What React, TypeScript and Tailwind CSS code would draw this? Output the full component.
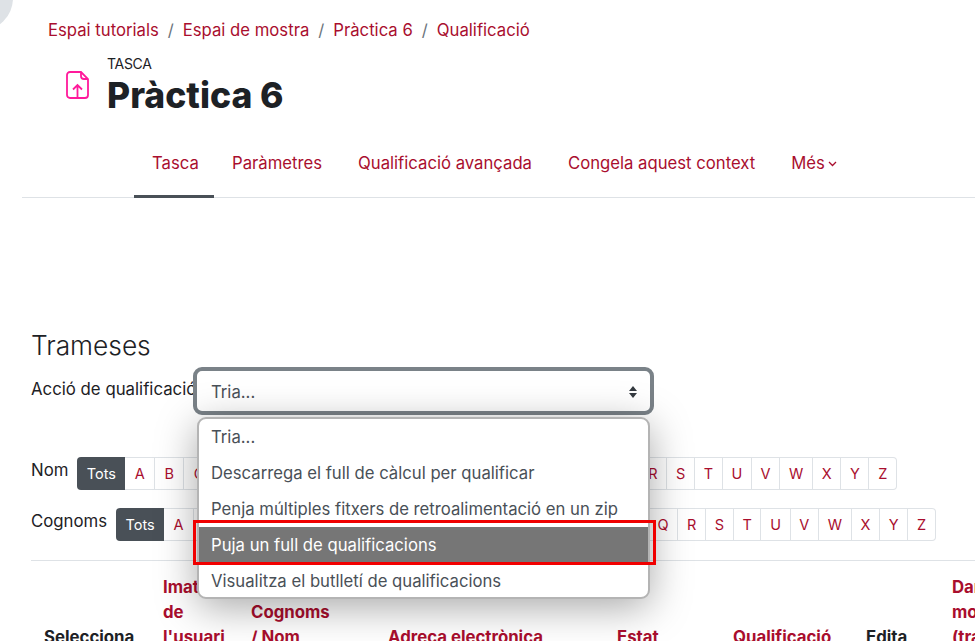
import React from 'react';

const letters = 'ABCDEFGHIJKLMNOPQRSTUVWXYZ'.split('');

// les lletres del final són més estretes que les del mig
const letterPad = (l: string) => {
  if ('ABC'.includes(l)) return 'px-[9.4px]';
  if ('DEFGHIJKLMNOP'.includes(l)) return 'px-[9.95px]';
  return 'px-[8.7px]';
};

const AlphaRow = ({ label }: { label: string }) => (
  <div className="flex items-start gap-[9px]">
    <span className="pt-[2px] text-[16.8px] leading-[24px] text-[#1d2125]">{label}</span>
    <div className="mt-[1px] flex h-[33px] text-[14.5px]">
      <span className="flex items-center rounded-l-[4px] bg-[#495057] px-[9.4px] text-white">Tots</span>
      {letters.map((l) => (
        <span
          key={l}
          className={`flex items-center border border-l-0 border-[#dee2e6] text-[#a90e2e] last:rounded-r-[4px] ${letterPad(l)}`}
        >
          {l}
        </span>
      ))}
    </div>
  </div>
);

const tabs = ['Paràmetres', 'Qualificació avançada', 'Congela aquest context'];

const options = [
  'Tria...',
  'Descarrega el full de càlcul per qualificar',
  'Penja múltiples fitxers de retroalimentació en un zip',
  'Puja un full de qualificacions',
  'Visualitza el butlletí de qualificacions',
];

export default function App() {
  return (
    <div className="relative h-[641px] w-[975px] overflow-hidden bg-white font-['Inter',sans-serif] text-[#1d2125]">
      {/* cercle de la cantonada */}
      <div className="absolute -left-[53px] -top-[35px] h-[66px] w-[66px] rounded-full bg-[#dee2e6]" />

      <nav className="flex gap-[9px] pl-[48px] pt-[18px] text-[16.7px] leading-[24px] text-[#a90e2e]">
        <span>Espai tutorials</span>
        <span className="text-[#6a737b]">/</span>
        <span>Espai de mostra</span>
        <span className="text-[#6a737b]">/</span>
        <span>Pràctica 6</span>
        <span className="text-[#6a737b]">/</span>
        <span>Qualificació</span>
      </nav>

      <div className="flex pl-[66px] pt-[14px]">
        <svg width="24" height="32" viewBox="0 0 24 32" fill="none" stroke="#ff1a9b" strokeWidth="1.8" className="mt-[14px]">
          <path d="M5 2h10l7 7v16a3 3 0 0 1-3 3H4a3 3 0 0 1-3-3V5a3 3 0 0 1 3-3z" />
          <path d="M15 2v4a3 3 0 0 0 3 3h4" />
          <path d="M11.5 29V15M7 19.5l4.5-4.5 4.5 4.5" />
        </svg>
        <div className="ml-[17px]">
          <div className="text-[14px] leading-[16px] -tracking-[0.3px]">TASCA</div>
          <h1 className="mt-[2px] text-[35.5px] font-extrabold leading-[44px]">Pràctica 6</h1>
        </div>
      </div>

      <div className="ml-[22px] mt-[22px] flex h-[58px] items-stretch border-b border-[#dee2e6] pl-[112px] text-[16.7px] text-[#a90e2e]">
        <div className="-mb-[1px] flex w-[80px] items-center border-b-[3px] border-[#495057] pb-[8px] pl-[18px]">Tasca</div>
        {tabs.map((t) => (
          <div key={t} className="flex items-center px-[18px] pb-[10px]">
            {t}
          </div>
        ))}
        <div className="flex items-center gap-[3px] px-[18px] pb-[10px]">
          Més
          <svg width="9" height="6" viewBox="0 0 9 6" fill="none" stroke="#a90e2e" strokeWidth="1.3">
            <path d="M1 1l3.5 3.5L8 1" />
          </svg>
        </div>
      </div>

      <div className="pl-[31px] pt-[133px]">
        <h2 className="text-[26.3px] font-light leading-[30px]">Trameses</h2>

        <div className="mt-[6px] flex items-start">
          <span className="w-[162px] shrink-0 whitespace-nowrap pt-[10px] text-[16.8px] leading-[24px]">Acció de qualificació</span>
          <div className="relative flex h-[48px] w-[461px] items-center justify-between rounded-[9px] border-[4px] border-[#7a8288] bg-white pl-[14px] pr-[12px] pt-[2px] text-[16.7px] text-[#495057]">
            <span className="pt-[2px]">Tria...</span>
            <svg width="10" height="14" viewBox="0 0 10 14" fill="#343a40">
              <path d="M5 1l4 5H1zM5 13L1 8h8z" />
            </svg>
          </div>
        </div>

        <div className="mt-[41px]">
          <AlphaRow label="Nom" />
        </div>
        <div className="mt-[17px]">
          <AlphaRow label="Cognoms" />
        </div>
        <div className="mt-[19px] border-t border-[#dee2e6]" />
      </div>

      <div className="mt-[14px] grid grid-cols-[119px_88px_137px_229px_116px_133px_86px_1fr] items-end whitespace-nowrap pl-[44px] text-[16.8px] font-bold leading-[25px] text-[#a90e2e]">
        <div className="text-[#1d2125]">Selecciona</div>
        <div>Imatge<br />de<br />l'usuari</div>
        <div>Cognoms<br />/ Nom</div>
        <div>Adreça electrònica</div>
        <div>Estat</div>
        <div>Qualificació</div>
        <div className="text-[#1d2125]">Edita</div>
        <div>Darrera<br />modificació<br />(tramesa)</div>
      </div>

      {/* llista desplegada del select */}
      <div className="absolute left-[197px] top-[417px] w-[453px] rounded-[9px] border-2 border-[#b4b4b4] bg-white text-[16.7px] text-[#495057] shadow-[0_8px_40px_rgba(0,0,0,0.35)]">
        {options.map((o, i) => (
          <div
            key={o}
            className={`flex h-[36px] items-center pl-[12px] pt-[2px] last:-mb-[2px] ${i === 3 ? 'bg-[#767676] text-white' : ''}`}
          >
            {o}
          </div>
        ))}
      </div>
      <div className="absolute left-[193px] top-[520px] h-[45px] w-[463px] border-[3px] border-[#f00000]" />
    </div>
  );
}
